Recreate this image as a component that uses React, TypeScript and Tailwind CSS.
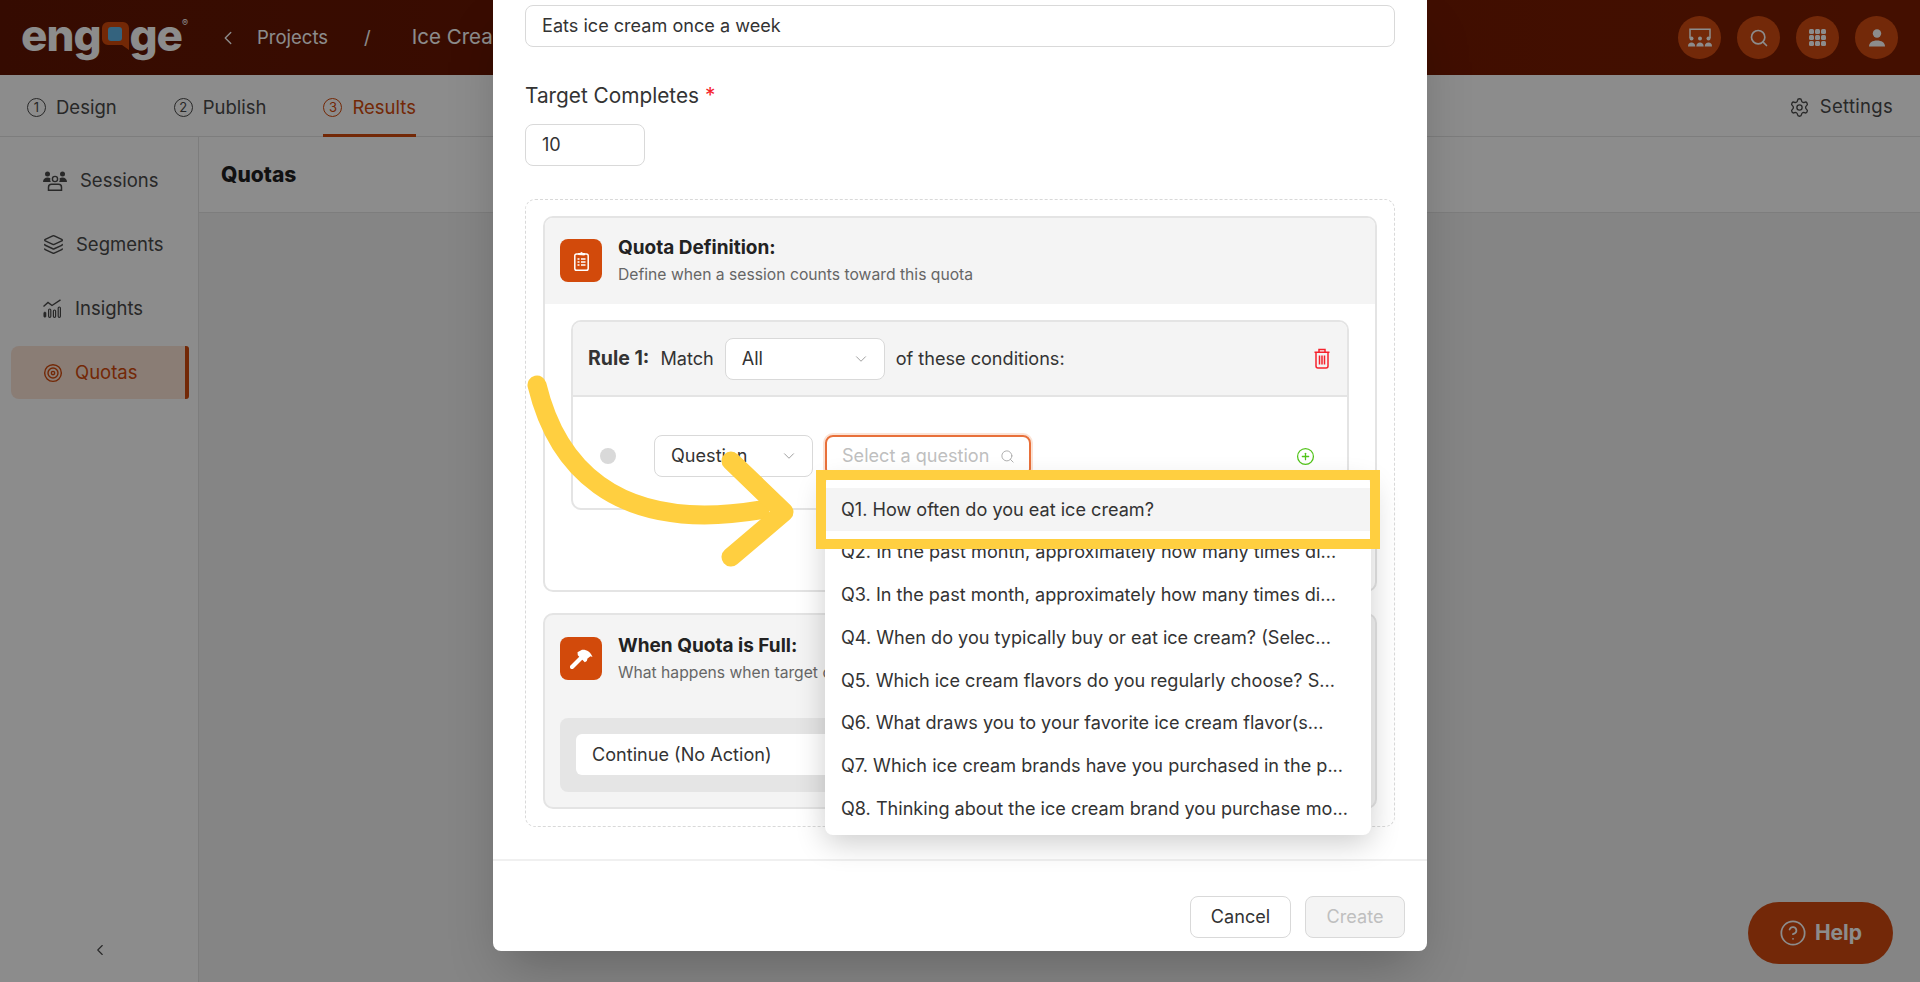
import { ChevronDown, ChevronLeft, CircleHelp, CirclePlus, Layers, Search, Settings, Target } from "lucide-react"

const questions = [
  "Q1. How often do you eat ice cream?",
  "Q2. In the past month, approximately how many times di...",
  "Q3. In the past month, approximately how many times di...",
  "Q4. When do you typically buy or eat ice cream? (Selec...",
  "Q5. Which ice cream flavors do you regularly choose? S...",
  "Q6. What draws you to your favorite ice cream flavor(s...",
  "Q7. Which ice cream brands have you purchased in the p...",
  "Q8. Thinking about the ice cream brand you purchase mo...",
]

function Logo() {
  return (
    <div className="flex items-start w-[170px] h-[40px] -ml-[1px] -mt-[5px] text-[44px] leading-[40px] font-extrabold tracking-[-1px] text-white font-['Inter',sans-serif]">
      <span>eng</span>
      <svg width="27" height="28" viewBox="0 0 27 28" className="mx-[1px] mt-[7px] shrink-0">
        <path d="M6 0h15a6 6 0 0 1 6 6v22l-7-5H6a6 6 0 0 1-6-6V6a6 6 0 0 1 6-6z" fill="#d24a0b" />
        <rect x="6" y="5" width="14" height="14" rx="3" fill="#5fb4e6" />
      </svg>
      <span>ge</span>
      <span className="text-[9px] leading-[12px] font-normal tracking-normal mt-[2px]">®</span>
    </div>
  )
}

function RoundIcon({ children }: { children: React.ReactNode }) {
  return <div className="w-[43px] h-[43px] rounded-full bg-[#d24c12] flex items-center justify-center text-white">{children}</div>
}

function StepTab({ n, label, active }: { n: number; label: string; active?: boolean }) {
  return (
    <div className={`h-[62px] flex items-center gap-[10px] border-b-[3px] pt-[6px] ${active ? "border-[#d24a0b] text-[#d24a0b]" : "border-transparent text-[#4a4a4a]"}`}>
      <span className={`w-[19px] h-[19px] rounded-full border flex items-center justify-center text-[13px] leading-none ${active ? "border-[#d24a0b]" : "border-[#4a4a4a]"}`}>{n}</span>
      <span>{label}</span>
    </div>
  )
}

function SessionsIcon() {
  return (
    <svg width="24" height="20" viewBox="0 0 24 20" fill="currentColor">
      <circle cx="4.500" cy="3" r="2.500" />
      <circle cx="19.500" cy="3" r="2.500" />
      <circle cx="12" cy="8" r="2.600" fill="none" stroke="currentColor" strokeWidth="1.400" />
      <path d="M0 11c0-3 2-4.500 4.500-4.500 1.300 0 2.300.4 3 1-.5 1-.4 2.500.5 3.500H0z" />
      <path d="M24 11c0-3-2-4.500-4.500-4.500-1.300 0-2.300.4-3 1 .5 1 .4 2.500-.5 3.500h8z" />
      <path d="M5.500 19.200v-3c0-2 1.500-3 3-3h7c1.500 0 3 1 3 3v3z" fill="none" stroke="currentColor" strokeWidth="1.500" />
    </svg>
  )
}

function InsightsIcon() {
  return (
    <svg width="19" height="19" viewBox="0 0 19 19" fill="none" stroke="currentColor">
      <path d="M0.500 7.500L5 3.500L9 6.500L17.500 0.800" strokeWidth="1.400" />
      <rect x="0.800" y="13" width="2.200" height="5.300" rx="1.100" fill="currentColor" strokeWidth="0.600" />
      <rect x="5.600" y="10" width="2.200" height="8.300" rx="1.100" strokeWidth="1.200" />
      <rect x="10.400" y="11" width="2.200" height="7.300" rx="1.100" strokeWidth="1.200" />
      <rect x="15.200" y="8" width="2.200" height="10.300" rx="1.100" strokeWidth="1.200" />
    </svg>
  )
}

function ClipboardIcon() {
  return (
    <svg width="15" height="20" viewBox="0 0 15 20" fill="none" stroke="currentColor" strokeWidth="1.500">
      <rect x="0.800" y="3" width="13.400" height="16.200" rx="1.800" />
      <path d="M4.500 3.500V2.500h1.700a1.400 1.400 0 0 1 2.600 0h1.700v1.500z" fill="currentColor" strokeWidth="1" />
      <path d="M3.500 8h2M7 8h4.500M3.500 11h2M7 11h4.500M3.500 14h2M7 14h4.500" strokeWidth="1.300" />
    </svg>
  )
}

function HammerIcon() {
  return (
    <svg width="23" height="20" viewBox="0 0 23 20" fill="currentColor">
      <path d="M2 18L11.500 8.500" fill="none" stroke="currentColor" strokeWidth="4.200" strokeLinecap="round" />
      <path d="M7.500 3.200L12 0.800C16.500 0.400 20.500 2.800 22.500 8L20.500 7.200L17.500 9.500L16.800 12L14.800 13.200L7.800 6.200z" />
    </svg>
  )
}

function TrashIcon() {
  return (
    <svg width="16" height="21" viewBox="0 0 16 21" fill="none" stroke="#f5222d" strokeWidth="1.500">
      <path d="M0.500 4.200h15M5 4V1.500h6V4" />
      <path d="M2 4.200V18a2 2 0 0 0 2 2h8a2 2 0 0 0 2-2V4.200" />
      <path d="M5.500 7.500v9M8 7.500v9M10.500 7.500v9" />
    </svg>
  )
}

function SideItem({ icon, label, gap, active }: { icon: React.ReactNode; label: string; gap: string; active?: boolean }) {
  return (
    <div className={`mx-[11px] w-[178px] h-[53px] mb-[11px] pl-[32px] flex items-center rounded-l-lg rounded-r-[3px] ${gap} ${active ? "bg-[#fbe3d6] text-[#d24a0b] border-r-4 border-[#d24a0b]" : "text-[#4a4a4a]"}`}>
      {icon}
      <span>{label}</span>
    </div>
  )
}

function SelectBox({ label, className }: { label: string; className: string }) {
  return (
    <div className={`h-[42px] flex items-center justify-between pl-[16px] pr-[14px] bg-white border border-[#d9d9d9] rounded-lg text-[#333] ${className}`}>
      <span>{label}</span>
      <ChevronDown className="w-[18px] h-[18px] text-[#999]" strokeWidth={1.25} />
    </div>
  )
}

function SectionHead({ icon, title, desc }: { icon: React.ReactNode; title: string; desc: string }) {
  return (
    <div className="flex items-center gap-[16px]">
      <div className="w-[42px] h-[43px] rounded-lg bg-[#d24a0b] flex items-center justify-center text-white">{icon}</div>
      <div>
        <div className="text-[19px] leading-[26px] font-bold text-[#222]">{title}</div>
        <div className="text-[15.7px] leading-[22px] mt-[3px] text-[#666] whitespace-nowrap">{desc}</div>
      </div>
    </div>
  )
}

export default function App() {
  return (
    <div className="relative w-[1920px] h-[982px] overflow-hidden bg-[#f2f2f2] text-[18.5px] font-['Inter',sans-serif]">
      <header className="h-[75px] flex items-center justify-between pl-[22px] pr-[22px] bg-gradient-to-r from-[#621502] to-[#7d1d00] text-white">
        <div className="flex items-center">
          <Logo />
          <ChevronLeft className="w-[22px] h-[22px] ml-[26px]" strokeWidth={1.5} />
          <span className="ml-[18px]">Projects</span>
          <span className="ml-[36px]">/</span>
          <span className="ml-[41px] text-[20.5px]">Ice Cream</span>
        </div>
        <div className="flex items-center gap-[16px]">
          <RoundIcon>
            <svg width="24" height="20" viewBox="0 0 24 20" fill="currentColor">
              <path d="M2 10V1.200h20V10" fill="none" stroke="currentColor" strokeWidth="1.500" />
              <circle cx="3.500" cy="10.500" r="2" /><circle cx="12" cy="10.500" r="2" /><circle cx="20.500" cy="10.500" r="2" />
              <path d="M0 18.500c0-3 1.500-4 3.500-4s3.500 1 3.800 4zM8.300 18.500c.2-3 1.700-4 3.700-4s3.500 1 3.700 4zM16.700 18.500c.3-3 1.800-4 3.800-4s3.500 1 3.500 4z" />
            </svg>
          </RoundIcon>
          <RoundIcon><Search className="w-[20px] h-[20px]" strokeWidth={2} /></RoundIcon>
          <RoundIcon>
            <svg width="17" height="17" viewBox="0 0 17 17" fill="currentColor">
              {[0, 6, 12].map((y) => [0, 6, 12].map((x) => <rect key={`${x}-${y}`} x={x} y={y} width="5" height="5" rx="1.500" />))}
            </svg>
          </RoundIcon>
          <RoundIcon>
            <svg width="16" height="18" viewBox="0 0 16 18" fill="currentColor">
              <circle cx="8" cy="4.500" r="4.200" />
              <path d="M0 17.500c0-4 3.500-6 8-6s8 2 8 6z" />
            </svg>
          </RoundIcon>
        </div>
      </header>

      <nav className="h-[62px] flex justify-between bg-white border-b border-[#e3e3e3] pl-[27px] pr-[27px]">
        <div className="flex gap-[57px]">
          <StepTab n={1} label="Design" />
          <StepTab n={2} label="Publish" />
          <StepTab n={3} label="Results" active />
        </div>
        <div className="flex items-center gap-[10px] pt-[3px] tracking-[0.3px] text-[#4a4a4a]">
          <Settings className="w-[21px] h-[21px]" strokeWidth={1.5} />
          <span>Settings</span>
        </div>
      </nav>

      <div className="flex h-[845px]">
        <aside className="relative w-[199px] bg-white border-r border-[#e3e3e3] pt-[17px]">
          <SideItem icon={<SessionsIcon />} label="Sessions" gap="gap-[13px]" />
          <SideItem icon={<Layers className="w-[21px] h-[21px]" strokeWidth={1.7} />} label="Segments" gap="gap-[12px]" />
          <SideItem icon={<InsightsIcon />} label="Insights" gap="gap-[13px]" />
          <SideItem icon={<Target className="w-[20px] h-[20px]" strokeWidth={1.7} />} label="Quotas" gap="gap-[12px]" active />
          <ChevronLeft className="absolute left-[91px] bottom-[23px] w-[18px] h-[18px] text-[#4a4a4a]" strokeWidth={1.5} />
        </aside>
        <main className="flex-1">
          <div className="h-[76px] pl-[22px] pt-[22px] bg-white border-b border-[#e3e3e3] text-[21px] font-extrabold text-[#1f1f1f]">Quotas</div>
        </main>
      </div>

      <button className="absolute left-[1748px] top-[902px] w-[145px] h-[62px] rounded-full bg-[#d14a10] text-white font-bold text-[21px] flex items-center justify-center gap-[8px]">
        <CircleHelp className="w-[28px] h-[28px]" strokeWidth={1.5} />
        Help
      </button>

      <div className="absolute inset-0 bg-black/45 flex justify-center items-start">
        <div className="w-[934px] h-[951px] bg-white rounded-b-lg shadow-2xl text-[#333] text-[18.1px]">
          <div className="px-[32px] pt-[5px]">
            <div className="h-[42px] flex items-center pl-[16px] border border-[#d9d9d9] rounded-lg">Eats ice cream once a week</div>
            <div className="mt-[35px] h-[28px] leading-[28px] text-[20.8px]">
              Target Completes <span className="text-[#f5222d]">*</span>
            </div>
            <div className="mt-[14px] w-[120px] h-[42px] flex items-center pl-[16px] border border-[#d9d9d9] rounded-lg">10</div>

            <div className="mt-[33px] h-[628px] border border-dashed border-[#d9d9d9] rounded-[10px] pt-[16px] px-[17px]">
              <div className="h-[376px] border-2 border-[#e4e4e4] rounded-[10px]">
                <div className="h-[86px] bg-[#f4f4f4] rounded-t-lg pl-[15px] pt-[17px]">
                  <SectionHead icon={<ClipboardIcon />} title="Quota Definition:" desc="Define when a session counts toward this quota" />
                </div>
                <div className="mx-[26px] mt-[16px] h-[190px] border-2 border-[#e4e4e4] rounded-[10px]">
                  <div className="h-[75px] bg-[#f4f4f4] rounded-t-lg border-b-2 border-[#e4e4e4] flex items-center pl-[15px] pr-[17px]">
                    <span className="font-bold text-[19.5px]">Rule 1:</span>
                    <span className="ml-[11px]">Match</span>
                    <SelectBox label="All" className="ml-[11px] w-[160px]" />
                    <span className="ml-[11px]">of these conditions:</span>
                    <span className="ml-auto"><TrashIcon /></span>
                  </div>
                  <div className="flex items-center pt-[38px] pl-[27px] pr-[32px]">
                    <span className="w-[16px] h-[16px] rounded-full bg-[#d9d9d9]" />
                    <SelectBox label="Question" className="ml-[38px] w-[159px]" />
                    <div className="relative ml-[12px]">
                      <div className="w-[206px] h-[42px] flex items-center justify-between pl-[15px] pr-[14px] border-2 border-[#e8703a] rounded-lg ring-2 ring-[#fbe3d6] text-[#bfbfbf]">
                        <span className="whitespace-nowrap">Select a question</span>
                        <Search className="w-[15px] h-[15px] text-[#aaa]" strokeWidth={1.5} />
                      </div>
                      <div className="absolute left-0 top-[43px] w-[546px] h-[357px] pt-[10px] bg-white rounded-lg shadow-[0_8px_30px_rgba(0,0,0,0.2)]">
                        {questions.map((q, i) => (
                          <div key={q} className={`h-[42.7px] flex items-center pl-[16px] whitespace-nowrap ${i === 0 ? "bg-[#f4f4f4]" : ""}`}>{q}</div>
                        ))}
                      </div>
                    </div>
                    <CirclePlus className="ml-auto w-[19px] h-[19px] text-[#52c41a]" strokeWidth={1.6} />
                  </div>
                </div>
              </div>

              <div className="mt-[21px] h-[196px] border-2 border-[#e4e4e4] rounded-[10px] bg-[#f4f4f4] pl-[15px] pr-[15px] pt-[18px]">
                <SectionHead icon={<HammerIcon />} title="When Quota is Full:" desc="What happens when target completes is reached" />
                <div className="mt-[34px] h-[74px] bg-[#e5e5e5] rounded-lg p-[16px]">
                  <div className="h-[41px] flex items-center pl-[16px] bg-white rounded-md">Continue (No Action)</div>
                </div>
              </div>
            </div>
          </div>

          <div className="mt-[32px] border-t-2 border-[#f0f0f0] pt-[35px] pr-[22px] flex justify-end gap-[14px]">
            <button className="w-[101px] h-[42px] rounded-lg border border-[#d9d9d9] bg-white">Cancel</button>
            <button className="w-[100px] h-[42px] rounded-lg border border-[#d9d9d9] bg-[#f4f4f4] text-[#bfbfbf]">Create</button>
          </div>
        </div>
      </div>

      {/* yellow callout on top of the screenshot */}
      <div className="absolute left-[816px] top-[470px] w-[564px] h-[79px] border-[10px] border-[#ffcf40]" />
      <svg className="absolute left-[520px] top-[370px]" width="290" height="210" viewBox="0 0 290 210" fill="none">
        <path d="M17 15C35 90 90 165 240 140" stroke="#ffcf40" strokeWidth="19" strokeLinecap="round" />
        <path d="M211 91L264 142L211 187" stroke="#ffcf40" strokeWidth="19" strokeLinecap="round" strokeLinejoin="round" />
      </svg>
    </div>
  )
}
